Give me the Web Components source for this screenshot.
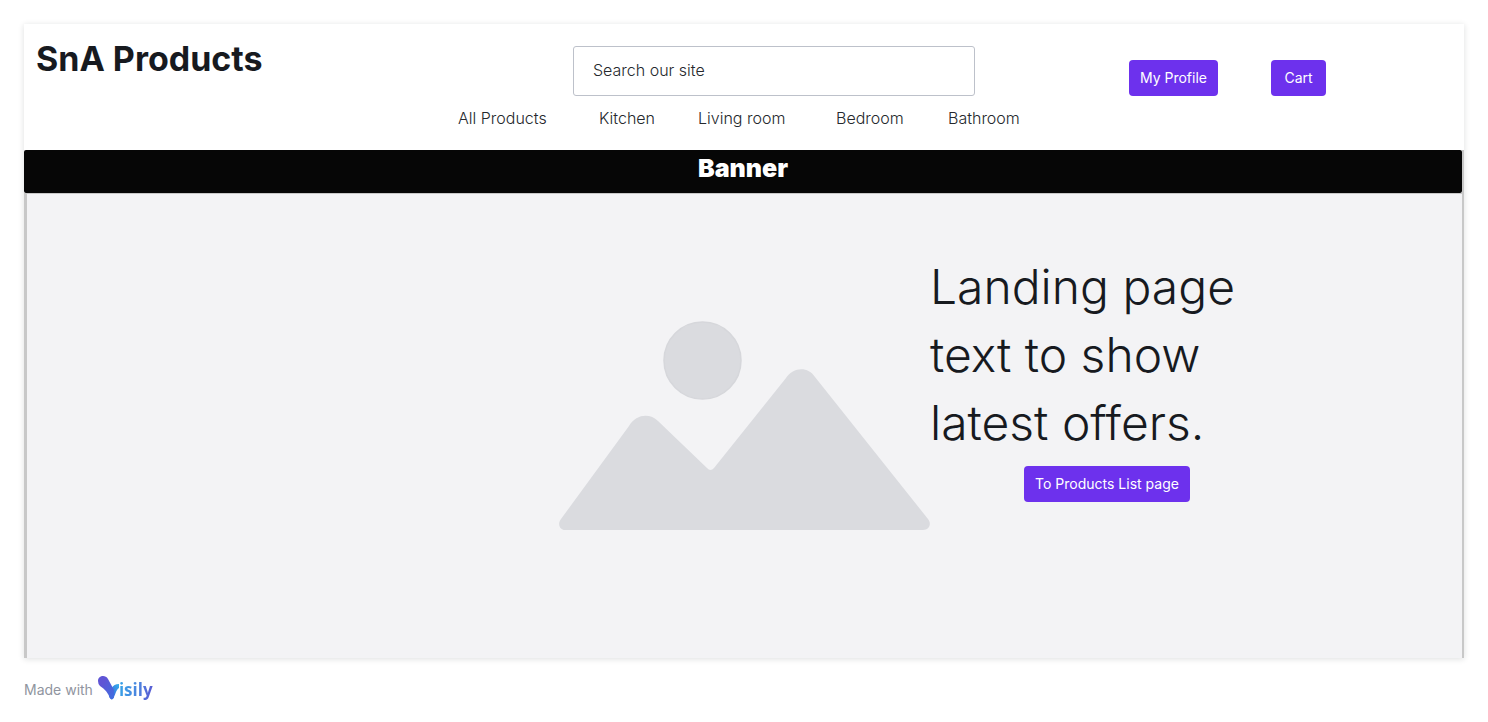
<!DOCTYPE html>
<html lang="en">
<head>
<meta charset="utf-8">
<meta name="viewport" content="width=device-width, initial-scale=1">
<title>SnA Products</title>
<style>
  body { margin: 0; background: #fff; color: #171a1f; font-family: Inter, "Liberation Sans", sans-serif; }
</style>
</head>
<body>
<shop-page>
  <shop-header slot="header">
    <site-search slot="search"></site-search>
    <action-button slot="actions">My Profile</action-button>
    <action-button slot="actions">Cart</action-button>
    <category-nav slot="nav"></category-nav>
  </shop-header>
  <promo-banner>Banner</promo-banner>
  <landing-hero>
    Landing page text to show latest offers.
    <action-button slot="action">To Products List page</action-button>
  </landing-hero>
  <made-with slot="footer"></made-with>
</shop-page>

<script>
const define = (name, html) => {
  const template = document.createElement('template');
  template.innerHTML = html;
  customElements.define(name, class extends HTMLElement {
    constructor() {
      super();
      this.attachShadow({ mode: 'open' }).append(template.content.cloneNode(true));
    }
  });
};

define('shop-page', `
  <style>
    :host { display: block; padding: 24px 24px 16px; }
    .card { background: #fff; box-shadow: 0 1px 6px rgba(23, 26, 31, .14); }
  </style>
  <div class="card">
    <slot name="header"></slot>
    <main><slot></slot></main>
  </div>
  <slot name="footer"></slot>
`);

define('shop-header', `
  <style>
    :host { display: block; }
    header {
      display: grid; grid-template-columns: 549fr 402fr 489fr;
      padding: 22px 0 20px;
    }
    h1 { margin: 0; padding-left: 12px; font-size: 34px; line-height: 26px; font-weight: 700; }
    .actions { display: flex; justify-content: flex-end; align-items: flex-end; gap: 53px; padding-right: 138px; }
    .nav { grid-column: 1 / -1; }
  </style>
  <header>
    <h1>SnA Products</h1>
    <slot name="search"></slot>
    <div class="actions"><slot name="actions"></slot></div>
    <div class="nav"><slot name="nav"></slot></div>
  </header>
`);

define('site-search', `
  <style>
    :host { display: block; }
    input {
      display: block; box-sizing: border-box; width: 100%; height: 50px; margin: 0;
      padding: 0 19px 2px; border: 1px solid #bdc1ca; border-radius: 3px; background: #fff;
      font: 300 16px/24px Inter, sans-serif; color: #25282d;
    }
    input::placeholder { color: #25282d; opacity: 1; }
  </style>
  <input type="search" placeholder="Search our site" aria-label="Search our site">
`);

define('action-button', `
  <style>
    :host { display: inline-block; }
    button {
      display: block; height: 36px; min-width: 55px; margin: 0; padding: 0 11px; border: 0; border-radius: 4px;
      background: #6d31ed; color: #fff; font: 400 14px/22px Inter, sans-serif; white-space: nowrap;
    }
  </style>
  <button type="button"><slot></slot></button>
`);

define('category-nav', `
  <style>
    :host { display: block; }
    ul {
      display: grid; grid-template-columns: 434fr 141fr 99fr 138fr 112fr 516fr;
      margin: 0; padding: 10px 0 0; list-style: none;
    }
    li { line-height: 24px; }
    li:first-child { grid-column: 2; }
    a { font-size: 16px; font-weight: 300; color: #25282d; text-decoration: none; white-space: nowrap; }
  </style>
  <nav aria-label="Categories">
    <ul>
      <li><a href="#all">All Products</a></li>
      <li><a href="#kitchen">Kitchen</a></li>
      <li><a href="#living-room">Living room</a></li>
      <li><a href="#bedroom">Bedroom</a></li>
      <li><a href="#bathroom">Bathroom</a></li>
    </ul>
  </nav>
`);

define('promo-banner', `
  <style>
    :host { display: block; border-right: 2px solid #c8c8c8; }
    h2 {
      margin: 0; padding: 0 0 7px; border-radius: 2px; background: #060606; color: #fff;
      font-size: 25px; line-height: 36px; font-weight: 900; text-align: center;
    }
  </style>
  <h2><slot></slot></h2>
`);

define('landing-hero', `
  <style>
    :host { display: block; }
    section {
      display: grid; grid-template-columns: 1fr 371px 1fr;
      box-sizing: border-box; background: #f3f3f5;
      border: solid #c8c8c8; border-width: 0 2px 0 3px;
      box-shadow: inset 0 1px #c8c8c8;
    }
    svg { grid-column: 2; display: block; width: 100%; margin: 128px 0; }
    .copy { padding-top: 60px; max-width: 354px; }
    p { margin: 0 0 9px; font-size: 48px; line-height: 68px; font-weight: 300; }
    .action { display: flex; justify-content: center; }
  </style>
  <section>
    <svg viewBox="0 0 371 209" aria-hidden="true" fill="#dadbdf">
      <circle cx="143.5" cy="39.5" r="38.5" stroke="#d6d7db" stroke-width="1.5"/>
      <path d="M6 209C1 209-2 203 2 198L70 105C77 93 91 92 99 100L148 147Q151.5 151 155 147L227 57C234 46 249 45 256 56L369 198C373 203 370 209 364 209Z"/>
    </svg>
    <div class="copy">
      <p><slot></slot></p>
      <div class="action"><slot name="action"></slot></div>
    </div>
  </section>
`);

define('made-with', `
  <style>
    :host { display: block; }
    footer { display: flex; align-items: center; gap: 5px; padding-top: 16px; font-size: 14px; line-height: 32px; font-weight: 400; color: #9095a0; }
    a { display: flex; align-items: flex-start; text-decoration: none; }
    svg { display: block; width: 21px; height: 24px; }
    span {
      font: 700 17px/28px "Open Sans", sans-serif; color: transparent;
      background: linear-gradient(100deg, #35a5e8, #4c84df 55%, #5b52d0);
      background-clip: text; -webkit-background-clip: text;
    }
  </style>
  <footer>
    Made with
    <a href="#visily" aria-label="Visily">
      <svg viewBox="0 0 21 24" aria-hidden="true">
        <defs>
          <linearGradient id="stem" x1="0" y1="0" x2="1" y2="1"><stop offset=".3" stop-color="#5f55d5"/><stop offset="1" stop-color="#3d6fe0"/></linearGradient>
          <linearGradient id="arm" x1="0" y1="1" x2="1" y2="0"><stop offset=".3" stop-color="#3b6ee0"/><stop offset="1" stop-color="#35b0ea"/></linearGradient>
        </defs>
        <path fill="url(#arm)" d="M11 20C12 14 14 8 21 8V12C18 14 18 17 16 21C15 24 12 24 11 20Z"/>
        <path fill="url(#stem)" d="M0 5C0 0 7-2 10 3C12 7 14 10 16 14V21C15 24 13 24 12 22C10 17 7 13 2 10Q0 8 0 5Z"/>
      </svg>
      <span>isily</span>
    </a>
  </footer>
`);
</script>
</body>
</html>
